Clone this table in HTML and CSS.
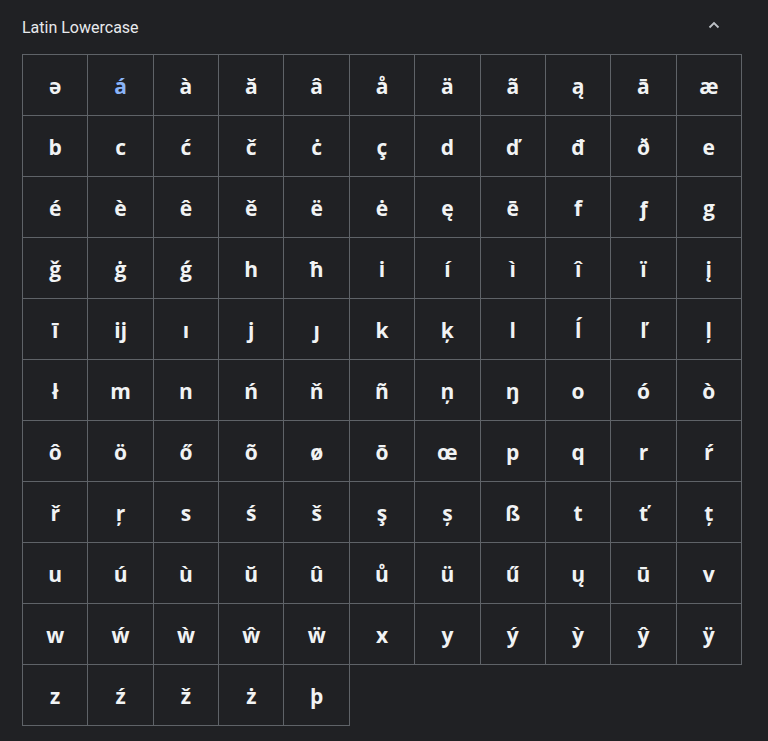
FILE: index.html
```html
<!DOCTYPE html>
<html lang="en">
<head>
<meta charset="utf-8">
<title>Latin Lowercase</title>
<link rel="stylesheet" href="styles.css">
</head>
<body>
<section class="panel">
  <header class="panel-head">
    <h2 class="panel-title">Latin Lowercase</h2>
    <button class="collapse" aria-label="Collapse">
      <svg width="12" height="8" viewBox="0 0 12 8"><path d="M1.5 6.5 L6 2 L10.5 6.5" fill="none" stroke="#bdc1c6" stroke-width="1.8"/></svg>
    </button>
  </header>
  <div class="grid">
    <div class="cell">ə</div><div class="cell active">á</div><div class="cell">à</div><div class="cell">ă</div><div class="cell">â</div><div class="cell">å</div><div class="cell">ä</div><div class="cell">ã</div><div class="cell">ą</div><div class="cell">ā</div><div class="cell">æ</div>
    <div class="cell">b</div><div class="cell">c</div><div class="cell">ć</div><div class="cell">č</div><div class="cell">ċ</div><div class="cell">ç</div><div class="cell">d</div><div class="cell">ď</div><div class="cell">đ</div><div class="cell">ð</div><div class="cell">e</div>
    <div class="cell">é</div><div class="cell">è</div><div class="cell">ê</div><div class="cell">ě</div><div class="cell">ë</div><div class="cell">ė</div><div class="cell">ę</div><div class="cell">ē</div><div class="cell">f</div><div class="cell">ƒ</div><div class="cell">g</div>
    <div class="cell">ǧ</div><div class="cell">ġ</div><div class="cell">ǵ</div><div class="cell">h</div><div class="cell">ħ</div><div class="cell">i</div><div class="cell">í</div><div class="cell">ì</div><div class="cell">î</div><div class="cell">ï</div><div class="cell">į</div>
    <div class="cell">ī</div><div class="cell">ĳ</div><div class="cell">ı</div><div class="cell">j</div><div class="cell">ȷ</div><div class="cell">k</div><div class="cell">ķ</div><div class="cell">l</div><div class="cell">ĺ</div><div class="cell">ľ</div><div class="cell">ļ</div>
    <div class="cell">ł</div><div class="cell">m</div><div class="cell">n</div><div class="cell">ń</div><div class="cell">ň</div><div class="cell">ñ</div><div class="cell">ņ</div><div class="cell">ŋ</div><div class="cell">o</div><div class="cell">ó</div><div class="cell">ò</div>
    <div class="cell">ô</div><div class="cell">ö</div><div class="cell">ő</div><div class="cell">õ</div><div class="cell">ø</div><div class="cell">ō</div><div class="cell">œ</div><div class="cell">p</div><div class="cell">q</div><div class="cell">r</div><div class="cell">ŕ</div>
    <div class="cell">ř</div><div class="cell">ŗ</div><div class="cell">s</div><div class="cell">ś</div><div class="cell">š</div><div class="cell">ş</div><div class="cell">ș</div><div class="cell">ß</div><div class="cell">t</div><div class="cell">ť</div><div class="cell">ț</div>
    <div class="cell">u</div><div class="cell">ú</div><div class="cell">ù</div><div class="cell">ŭ</div><div class="cell">û</div><div class="cell">ů</div><div class="cell">ü</div><div class="cell">ű</div><div class="cell">ų</div><div class="cell">ū</div><div class="cell">v</div>
    <div class="cell">w</div><div class="cell">ẃ</div><div class="cell">ẁ</div><div class="cell">ŵ</div><div class="cell">ẅ</div><div class="cell">x</div><div class="cell">y</div><div class="cell">ý</div><div class="cell">ỳ</div><div class="cell">ŷ</div><div class="cell">ÿ</div>
    <div class="cell">z</div><div class="cell">ź</div><div class="cell">ž</div><div class="cell">ż</div><div class="cell">þ</div>
  </div>
</section>
</body>
</html>
```

FILE: styles.css
```css
html, body {
  margin: 0;
  padding: 0;
  background: #202124;
  height: 100%;
  overflow: hidden;
}
body {
  font-family: Roboto, "Liberation Sans", sans-serif;
  color: #e8eaed;
}
.panel {
  padding: 0 38px 0 22px;
}
.panel-head {
  display: flex;
  align-items: center;
  justify-content: space-between;
  height: 54px;
}
.panel-title {
  margin: 0;
  font-size: 16px;
  font-weight: 400;
  color: #e8eaed;
}
.collapse {
  background: none;
  border: 0;
  padding: 0;
  width: 32px;
  height: 32px;
  display: flex;
  align-items: center;
  justify-content: center;
  margin-top: -4px;
}
.grid {
  display: grid;
  grid-template-columns: repeat(11, 1fr);
  grid-auto-rows: 61px;
  width: 719px;
  padding: 1px 0 0 1px;
}
.cell {
  margin: -1px 0 0 -1px;
  border: 1px solid #5f6368;
  display: flex;
  align-items: center;
  justify-content: center;
  font-family: "Open Sans", "DejaVu Sans", sans-serif;
  font-weight: 700;
  font-size: 21px;
  color: #f1f3f4;
  padding-top: 2px;
}
.cell.active {
  color: #8ab4f8;
}
```
